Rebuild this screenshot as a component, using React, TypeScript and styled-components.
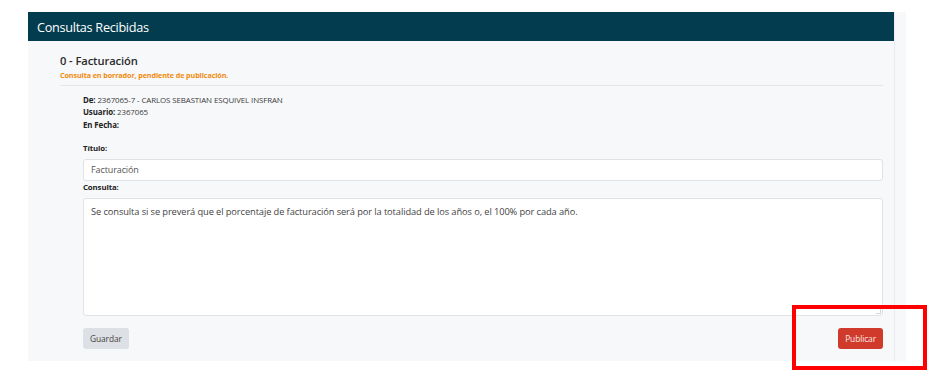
import React from "react";
import styled, { createGlobalStyle } from "styled-components";

const Global = createGlobalStyle`
  html, body { margin: 0; padding: 0; background: #ffffff; }
  body { font-family: "Open Sans", "Noto Sans", sans-serif; color: #333; }
  * { box-sizing: border-box; }
`;

const Page = styled.div`
  width: 927px;
  height: 378px;
  padding: 12px 0 0 28px;
  position: relative;
`;

const Shell = styled.div`
  width: 878px;
  background: #f7f8fa;
  display: flex;
`;

const Card = styled.section`
  width: 867px;
  display: flex;
  flex-direction: column;
  border-right: 1px solid #e9ebee;
`;

const Header = styled.header`
  height: 29px;
  background: #033c4e;
  color: #ffffff;
  font-size: 12.7px;
  letter-spacing: -0.3px;
  padding: 0 0 0 9px;
  display: flex;
  align-items: center;
`;

const Body = styled.div`
  padding: 12px 11px 12px 32px;
  display: flex;
  flex-direction: column;
`;

const Title = styled.h2`
  margin: 0;
  font-size: 11.2px;
  font-weight: 600;
  color: #2b2b2b;
  letter-spacing: -0.1px;
  line-height: 15px;
`;

const Status = styled.div`
  margin-top: 2px;
  font-size: 7.2px;
  font-weight: 700;
  color: #f28a0c;
  line-height: 10px;
  letter-spacing: -0.1px;
`;

const Divider = styled.hr`
  margin: 5px 0 0 0;
  border: none;
  border-top: 1px solid #e4e6e9;
`;

const Details = styled.div`
  padding: 8px 0 0 23px;
  display: flex;
  flex-direction: column;
`;

const InfoLine = styled.div`
  font-size: 7.9px;
  line-height: 12.3px;
  color: #3a3a3a;
  letter-spacing: -0.1px;
  b { font-weight: 700; color: #222; }
`;

const Label = styled.div<{ $top: number }>`
  margin-top: ${(p) => p.$top}px;
  font-size: 7.8px;
  font-weight: 700;
  color: #222;
  line-height: 12px;
  letter-spacing: -0.1px;
`;

const Input = styled.div`
  margin-top: 5px;
  height: 22px;
  background: #ffffff;
  border: 1px solid #dfe2e6;
  border-radius: 3px;
  padding: 0 7px;
  display: flex;
  align-items: center;
  font-size: 9px;
  color: #555;
  letter-spacing: -0.1px;
`;

const TextArea = styled.div`
  margin-top: 5px;
  height: 118px;
  background: #ffffff;
  border: 1px solid #dfe2e6;
  border-radius: 3px;
  padding: 6px 7px;
  font-size: 9.3px;
  color: #444;
  letter-spacing: -0.1px;
  position: relative;
`;

const Grip = styled.span`
  position: absolute;
  right: 1px;
  bottom: 1px;
  width: 5px;
  height: 5px;
  border-right: 1px solid #bbb;
  border-bottom: 1px solid #bbb;
  opacity: 0.6;
`;

const Actions = styled.div`
  margin-top: 12px;
  display: flex;
  justify-content: space-between;
`;

const Button = styled.button<{ $variant: "secondary" | "danger" }>`
  height: 21px;
  border: none;
  border-radius: 3px;
  padding: 0 7px;
  font-family: inherit;
  font-size: 8.4px;
  letter-spacing: -0.1px;
  background: ${(p) => (p.$variant === "danger" ? "#cf3a2b" : "#dde0e4")};
  color: ${(p) => (p.$variant === "danger" ? "#fbe9e7" : "#444")};
`;

const Highlight = styled.div`
  position: absolute;
  left: 792px;
  top: 305px;
  width: 135px;
  height: 65px;
  border: 4px solid #ff0000;
  pointer-events: none;
`;

const Scroll = styled.div`
  width: 11px;
  background: #f7f8fa;
`;

export default function App() {
  return (
    <>
      <Global />
      <Page>
        <Shell>
          <Card>
            <Header>Consultas Recibidas</Header>
            <Body>
              <Title>0 - Facturación</Title>
              <Status>Consulta en borrador, pendiente de publicación.</Status>
              <Divider />
              <Details>
                <InfoLine>
                  <b>De:</b> 2367065-7 - CARLOS SEBASTIAN ESQUIVEL INSFRAN
                </InfoLine>
                <InfoLine>
                  <b>Usuario:</b> 2367065
                </InfoLine>
                <InfoLine>
                  <b>En Fecha:</b>
                </InfoLine>
                <Label $top={11}>Título:</Label>
                <Input>Facturación</Input>
                <Label $top={0}>Consulta:</Label>
                <TextArea>
                  Se consulta si se preverá que el porcentaje de facturación será por la totalidad de los años o, el 100% por cada año.
                  <Grip />
                </TextArea>
                <Actions>
                  <Button $variant="secondary">Guardar</Button>
                  <Button $variant="danger">Publicar</Button>
                </Actions>
              </Details>
            </Body>
          </Card>
          <Scroll />
        </Shell>
        <Highlight />
      </Page>
    </>
  );
}
